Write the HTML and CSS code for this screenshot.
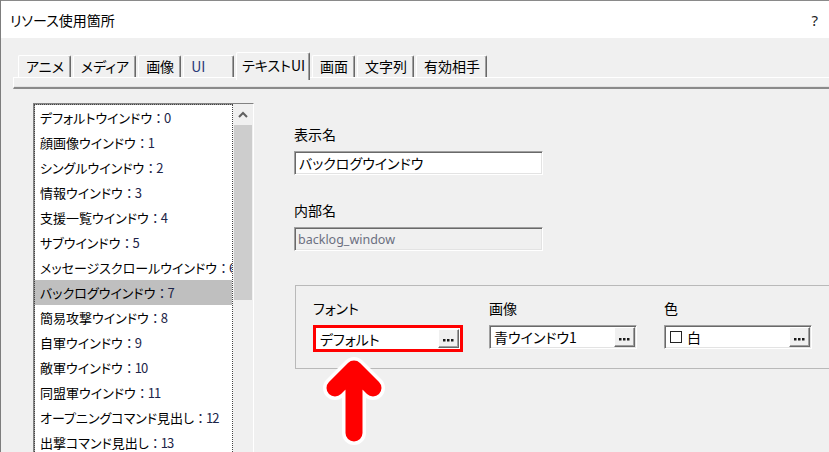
FILE: index.html
```html
<!DOCTYPE html>
<html lang="ja">
<head>
<meta charset="utf-8">
<title>リソース使用箇所</title>
<link rel="stylesheet" href="styles.css">
</head>
<body>
<div class="window">
  <header class="titlebar">
    <span class="title">リソース使用箇所</span>
    <span class="help">?</span>
  </header>
  <nav class="tabs">
    <div class="tab">アニメ</div>
    <div class="tab">メディア</div>
    <div class="tab">画像</div>
    <div class="tab latin">UI</div>
    <div class="tab active">テキストUI</div>
    <div class="tab">画面</div>
    <div class="tab">文字列</div>
    <div class="tab">有効相手</div>
  </nav>
  <div class="tab-strip"></div>
  <main class="content">
    <div class="listbox">
      <ul class="items">
        <li>デフォルトウインドウ<span class="num">：0</span></li>
        <li>顔画像ウインドウ<span class="num">：1</span></li>
        <li>シングルウインドウ<span class="num">：2</span></li>
        <li>情報ウインドウ<span class="num">：3</span></li>
        <li>支援一覧ウインドウ<span class="num">：4</span></li>
        <li>サブウインドウ<span class="num">：5</span></li>
        <li>メッセージスクロールウインドウ<span class="num">：6</span></li>
        <li class="selected">バックログウインドウ<span class="num">：7</span></li>
        <li>簡易攻撃ウインドウ<span class="num">：8</span></li>
        <li>自軍ウインドウ<span class="num">：9</span></li>
        <li>敵軍ウインドウ<span class="num">：10</span></li>
        <li>同盟軍ウインドウ<span class="num">：11</span></li>
        <li>オープニングコマンド見出し<span class="num">：12</span></li>
        <li>出撃コマンド見出し<span class="num">：13</span></li>
      </ul>
      <div class="scrollbar">
        <div class="sb-up">
          <svg width="10" height="7" viewBox="0 0 10 7"><path d="M1 6 L5 2 L9 6" fill="none" stroke="#606060" stroke-width="2"/></svg>
        </div>
        <div class="sb-thumb"></div>
      </div>
    </div>
    <section class="props">
      <div class="label first">表示名</div>
      <div class="field wide"><span class="value">バックログウインドウ</span></div>
      <div class="label second">内部名</div>
      <div class="field wide disabled"><span class="value latin">backlog_window</span></div>
      <div class="group">
        <div class="col">
          <div class="label">フォント</div>
          <div class="field picker highlight">
            <span class="value">デフォルト</span>
            <span class="dots-btn"><svg width="11" height="3" viewBox="0 0 11 3"><rect x="0" y="0" width="2.5" height="2.5"/><rect x="4" y="0" width="2.5" height="2.5"/><rect x="8" y="0" width="2.5" height="2.5"/></svg></span>
          </div>
        </div>
        <div class="col">
          <div class="label">画像</div>
          <div class="field picker">
            <span class="value">青ウインドウ1</span>
            <span class="dots-btn"><svg width="11" height="3" viewBox="0 0 11 3"><rect x="0" y="0" width="2.5" height="2.5"/><rect x="4" y="0" width="2.5" height="2.5"/><rect x="8" y="0" width="2.5" height="2.5"/></svg></span>
          </div>
        </div>
        <div class="col">
          <div class="label">色</div>
          <div class="field picker">
            <span class="value"><span class="swatch"></span>白</span>
            <span class="dots-btn"><svg width="11" height="3" viewBox="0 0 11 3"><rect x="0" y="0" width="2.5" height="2.5"/><rect x="4" y="0" width="2.5" height="2.5"/><rect x="8" y="0" width="2.5" height="2.5"/></svg></span>
          </div>
        </div>
      </div>
    </section>
  </main>
  <svg class="arrow" width="70" height="100" viewBox="0 0 70 100">
    <path d="M33 83 L33 20 M14 38 L33 19 L52 38" fill="none" stroke="#fff" stroke-width="24" stroke-linecap="round" stroke-linejoin="round"/>
    <path d="M33 83 L33 20 M14 38 L33 19 L52 38" fill="none" stroke="#ff0000" stroke-width="17" stroke-linecap="round" stroke-linejoin="round"/>
  </svg>
</div>
</body>
</html>
```

FILE: styles.css
```css
* { box-sizing: border-box; }
html, body { margin: 0; padding: 0; }
body {
  width: 829px;
  height: 452px;
  overflow: hidden;
  background: #f0f0f0;
  font-family: "Noto Sans CJK JP", sans-serif;
  font-size: 13px;
  color: #000;
}
.window {
  position: relative;
  width: 829px;
  height: 452px;
  overflow: hidden;
  border-left: 1px solid #7d7d7d;
}
.titlebar {
  height: 38px;
  background: #fff;
  border-top: 1px solid #8a8a8a;
  display: flex;
  align-items: center;
  justify-content: space-between;
  padding: 0 11px 0 9px;
}
.title {
  font-size: 14px;
  font-feature-settings: "palt";
}
.help {
  font-family: "Noto Sans", sans-serif;
  font-size: 15px;
  color: #222;
}
.tabs {
  height: 39px;
  padding: 14px 0 0 17px;
  display: flex;
  align-items: flex-end;
  gap: 2px;
}
.tab {
  height: 22px;
  padding: 0 6px 0 7px;
  line-height: 20px;
  font-size: 14px;
  font-feature-settings: "palt";
  background: #f0f0f0;
  border-top: 1px solid #fff;
  border-left: 1px solid #fff;
  border-right: 1px solid #696969;
  box-shadow: inset -1px 0 #a0a0a0;
  border-radius: 2px 2px 0 0;
}
.tab.latin { width: 51px; color: #2a3a78; }
.tab.active {
  height: 28px;
  line-height: 25px;
  margin-bottom: -3px;
  position: relative;
  z-index: 1;
  padding: 0 4px 0 5px;
}
.tab-strip {
  height: 12px;
  margin-left: 12px;
  border-top: 1px solid #fff;
  border-left: 1px solid #fff;
  border-bottom: 2px solid #8a8a8a;
  box-shadow: 0 -1px 0 #e3e3e3 inset;
}
.content {
  display: flex;
  gap: 40px;
  padding: 14px 0 0 32px;
}
.listbox {
  display: flex;
  flex: none;
  width: 221px;
  height: 360px;
  background: #fff;
  border: 1px solid;
  border-color: #828282 #fff #fff #828282;
  box-shadow: inset 1px 1px 0 #a0a0a0;
}
.items {
  flex: 1;
  min-width: 0;
  margin: 0;
  padding: 0;
  list-style: none;
  border: 1px dotted #444;
  border-bottom: none;
  overflow: hidden;
}
.items li {
  height: 25px;
  line-height: 25px;
  padding-left: 5px;
  white-space: nowrap;
  overflow: hidden;
  font-feature-settings: "palt";
  font-size: 13px;
}
.items li .num {
  font-feature-settings: normal;
  letter-spacing: -1px;
  color: #1c2448;
}
.items li.selected { background: #bfbfbf; }
.scrollbar {
  flex: none;
  width: 20px;
  background: #f0f0f0;
  display: flex;
  flex-direction: column;
}
.sb-up {
  height: 21px;
  display: flex;
  align-items: center;
  justify-content: center;
}
.sb-thumb {
  height: 175px;
  margin: 0 1px;
  background: #cdcdcd;
}
.props {
  display: flex;
  flex-direction: column;
  align-items: flex-start;
}
.label {
  line-height: 16px;
  font-size: 14px;
  font-feature-settings: "palt";
}
.label.first { margin-top: 23px; }
.label.second { margin-top: 27px; }
.field {
  display: flex;
  align-items: center;
  height: 24px;
  margin-top: 9px;
  background: #fff;
  border: 1px solid;
  border-color: #a0a0a0 #fff #fff #a0a0a0;
  box-shadow: inset 1px 1px 0 #696969, inset -1px -1px 0 #e3e3e3;
}
.field.wide { width: 249px; }
.field.disabled { background: #f0f0f0; color: #6d6d6d; }
.value {
  flex: 1;
  padding-left: 4px;
  white-space: nowrap;
  font-size: 14px;
  font-feature-settings: "palt";
  display: flex;
  align-items: center;
}
.value.latin {
  font-family: "Noto Sans", sans-serif;
  font-size: 12.5px;
  color: #6b6f80;
  padding-left: 3px;
}
.group {
  display: flex;
  width: 560px;
  height: 84px;
  margin: 34px 0 0 1px;
  padding: 14px 0 0 17px;
  border: 1px solid #b9b9b9;
}
.col { width: 176px; flex: none; }
.col:nth-child(2) { width: 175px; }
.field.picker { width: 148px; padding-right: 1px; }
.field.highlight {
  width: 150px;
  height: 27px;
  border: 3px solid #ff0000;
  box-shadow: none;
  margin-top: 9px;
}
.dots-btn {
  width: 21px;
  height: 20px;
  display: flex;
  align-items: center;
  justify-content: center;
  padding-top: 4px;
  background: #f0f0f0;
  border: 1px solid;
  border-color: #fff #696969 #696969 #fff;
  box-shadow: inset -1px -1px 0 #a0a0a0;
}
.dots-btn svg { fill: #1a1a1a; }
.field.highlight .dots-btn { height: 19px; }
.swatch {
  display: inline-block;
  width: 12px;
  height: 12px;
  border: 1px solid #222;
  margin: 0 5px 0 1px;
}
.arrow {
  position: absolute;
  left: 320px;
  top: 350px;
}
```
